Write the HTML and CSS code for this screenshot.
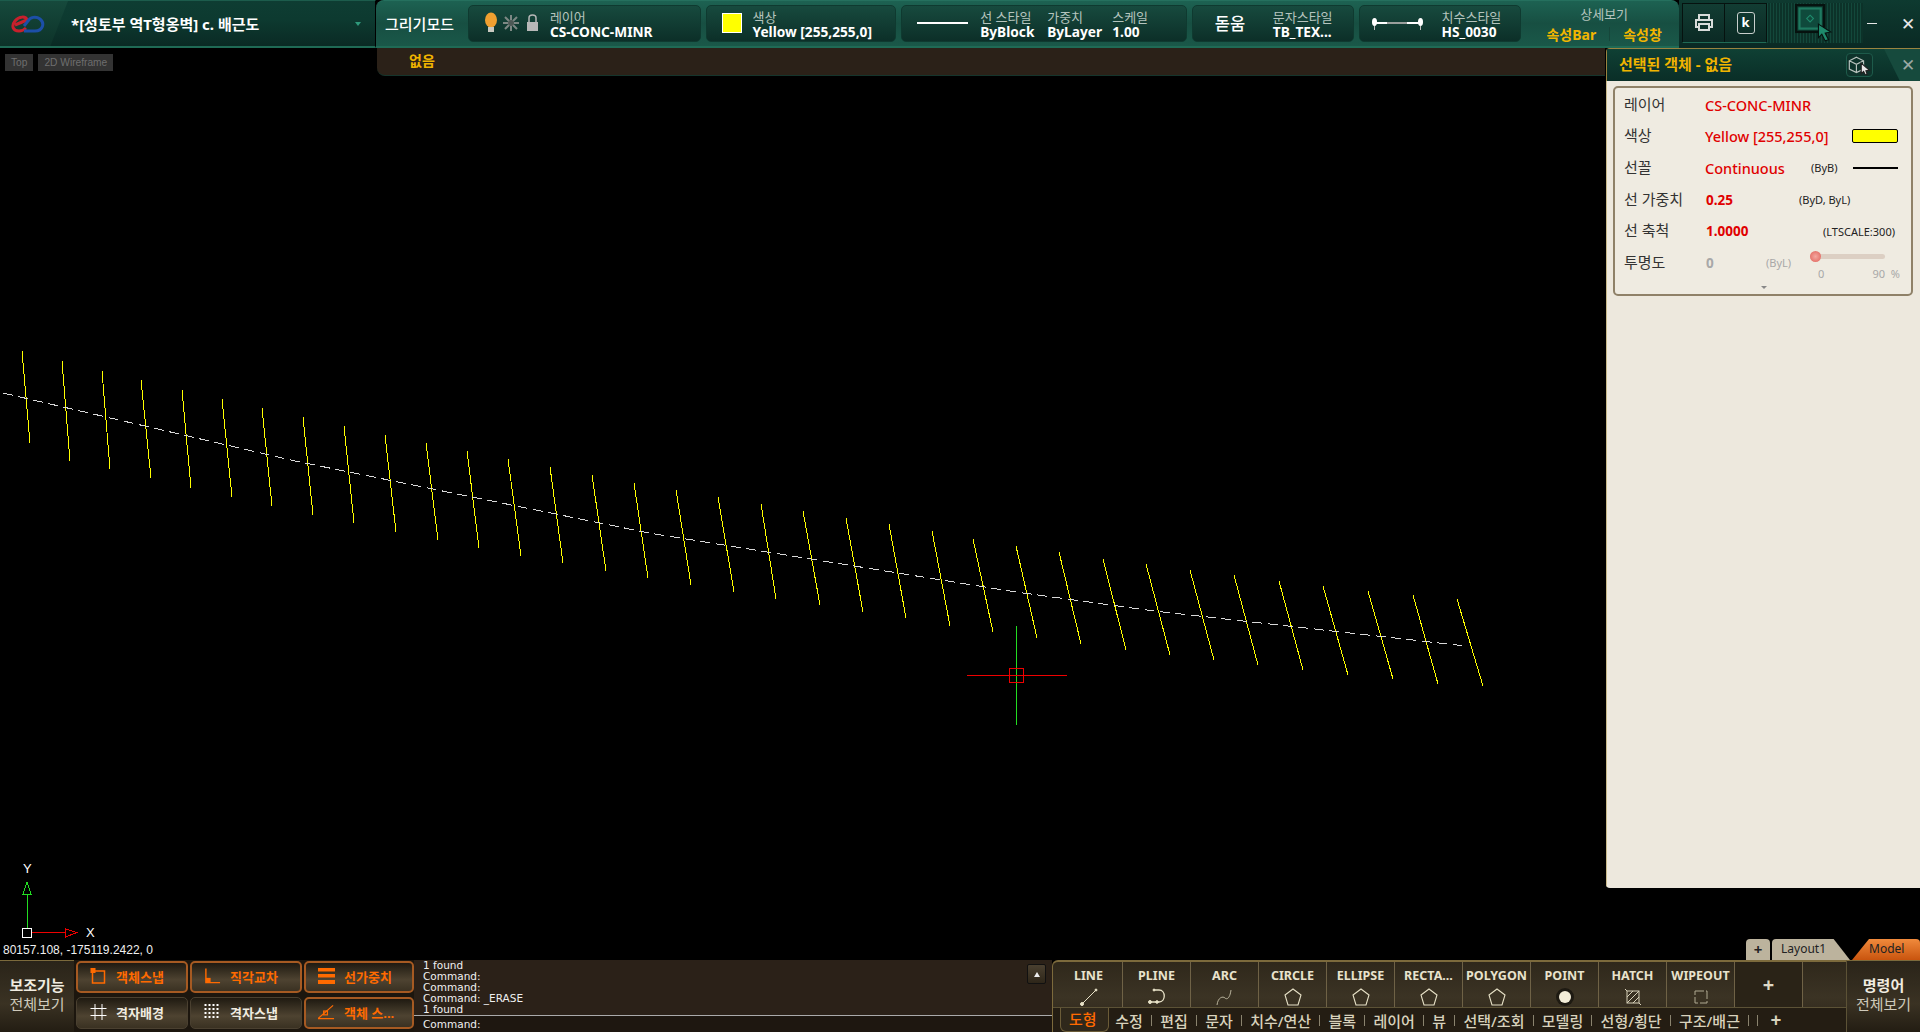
FILE: index.html
```html
<!DOCTYPE html>
<html lang="ko">
<head>
    <meta charset="UTF-8">
    <title>*[성토부 역T형옹벽] c. 배근도</title>
    <link rel="stylesheet" href="styles.css">
</head>
<body>
    <header class="topbar">
        <div class="title-panel">
            <div class="logo-zone">
                <svg width="34" height="18" viewBox="0 0 34 18" fill="none" stroke-width="3">
                    <path d="M4 10 L16 5 C15 1 8 1 4 6 C0 11 2 16 8 16 C11 16 13 15 15 13" stroke="#c8202c"/>
                    <path d="M13 16 L24 16 C32 16 34 8 29 4 C25 1 19 2 17 6 L13 11" stroke="#1c4fa8"/>
                </svg>
            </div>
            <span class="doc-title">*[성토부 역T형옹벽] c. 배근도</span>
            <i class="tri-down"></i>
        </div>
        <div class="toolbar">
            <span class="mode-label">그리기모드</span>
            <div class="group group-layer">
                <svg class="layer-icons" width="62" height="24" viewBox="0 0 62 24">
                    <ellipse cx="7" cy="9" rx="6" ry="7.5" fill="#f0a030"/>
                    <rect x="4" y="16" width="6" height="5" fill="#c9c9c0"/>
                    <g stroke="#7d8884" stroke-width="2">
                        <path d="M27 4V20M19 12H35M21 6L33 18M33 6L21 18"/>
                    </g>
                    <circle cx="27" cy="12" r="3" fill="#4d5855"/>
                    <path d="M45 11V7C45 3 52 3 52 7V11" fill="none" stroke="#b8b8b8" stroke-width="1.5"/>
                    <rect x="43" y="11" width="11" height="9" fill="#b8b8b8"/>
                </svg>
                <div class="field"><small>레이어</small><b>CS-CONC-MINR</b></div>
            </div>
            <div class="group group-color">
                <i class="color-swatch"></i>
                <div class="field"><small>색상</small><b>Yellow [255,255,0]</b></div>
            </div>
            <div class="group group-line">
                <i class="line-sample"></i>
                <div class="field f-linetype"><small>선 스타일</small><b>ByBlock</b></div>
                <div class="field f-weight"><small>가중치</small><b>ByLayer</b></div>
                <div class="field"><small>스케일</small><b>1.00</b></div>
            </div>
            <div class="group group-text">
                <span class="font-name">돋움</span>
                <div class="field"><small>문자스타일</small><b>TB_TEX...</b></div>
            </div>
            <div class="group group-dim">
                <svg width="53" height="14" viewBox="0 0 53 14" class="dim-icon">
                    <path d="M4 7H16" stroke="#fff" stroke-width="2"/>
                    <path d="M16 7H36" stroke="#9a9f9c" stroke-width="2"/>
                    <path d="M36 7H49" stroke="#fff" stroke-width="2"/>
                    <ellipse cx="3.5" cy="6" rx="2.5" ry="4" fill="#fff"/>
                    <ellipse cx="49.5" cy="6" rx="2.5" ry="4" fill="#fff"/>
                    <path d="M3.5 10V14M49.5 10V14" stroke="#bbb"/>
                </svg>
                <div class="field"><small>치수스타일</small><b>HS_0030</b></div>
            </div>
            <div class="details">
                <small>상세보기</small>
                <div class="details-links"><b>속성Bar</b><i></i><b>속성창</b></div>
            </div>
        </div>
        <div class="win-controls">
            <div class="win-buttons">
                <button class="win-btn">
                    <svg width="22" height="22" viewBox="0 0 22 22" fill="none" stroke="#d8dcda" stroke-width="2">
                        <path d="M6 7V3H16V7M6 15H3V8H19V15H16"/>
                        <rect x="6" y="12" width="10" height="6"/>
                    </svg>
                </button>
                <button class="win-btn"><span class="k-key">k</span></button>
            </div>
            <div class="stripes">
                <svg width="38" height="38" viewBox="0 0 34 34" class="screen-icon">
                    <rect x="1" y="1" width="25" height="24" fill="#0d3a30" stroke="#06120f" stroke-width="2"/>
                    <rect x="4" y="4" width="19" height="18" fill="#0f4a3c" stroke="#1f7a60" stroke-width="2"/>
                    <path d="M13.5 10L16.5 13L13.5 16L10.5 13Z" fill="none" stroke="#1f8a6c"/>
                    <path d="M21 18L32 25L27 26L30 32L27 33L24 27L21 30Z" fill="#1f8a6c" stroke="#06120f"/>
                </svg>
            </div>
            <i class="win-min"></i>
            <span class="win-close">✕</span>
        </div>
    </header>

    <main class="workspace">
        <svg class="drawing" width="1920" height="912" viewBox="0 48 1920 912" shape-rendering="crispEdges" fill="none">
            <g stroke="#ffff00">
                <path d="M22 351L30 443M62 361L70 461M102 371L110 469M141 380L151 478M182 390L191 488M222 399L232 497M262 408L272 506"/>
                <path d="M303 417L313 515M344 426L354 523M385 435L396 532M426 443L438 540M467 451L479 548M508 459L521 556M550 467L563 563M592 475L606 571M634 483L648 578"/>
                <path d="M676 490L691 585M718 497L734 592M761 504L776 599M803 511L820 605M846 518L863 612M889 524L906 618M932 531L950 626M973 539L993 632"/>
                <path d="M1016 546L1037 638M1059 552L1081 644M1103 559L1126 650M1146 564L1170 655M1190 570L1214 660M1234 575L1258 665M1279 581L1303 670M1323 586L1348 675M1368 591L1393 679M1413 595L1438 684M1457 599L1483 686"/>
            </g>
            <polyline points="3,393 295,461 649,533 1016,592 1154,611 1466,646" stroke="#d8d8d8" stroke-dasharray="10 5.5"/>
            <path d="M1016.5 626V725" stroke="#22dd22"/>
            <path d="M967 675.5H1067" stroke="#ee0000"/>
            <rect x="1009.5" y="668.5" width="14" height="14" stroke="#ee0000" stroke-width="1.5"/>
            <path d="M27.5 928V894" stroke="#22dd22"/>
            <path d="M27 882L23 894H31Z" stroke="#22dd22"/>
            <path d="M32 932.5H65" stroke="#ee0000"/>
            <path d="M65.5 929V937L77 932.5Z" stroke="#ee0000"/>
            <rect x="22.5" y="928.5" width="9" height="9" stroke="#fff"/>
            <text x="23" y="873" class="axis">Y</text>
            <text x="86" y="937" class="axis">X</text>
        </svg>
        <div class="canvas-col">
            <div class="subbar"><span>없음</span></div>
            <div class="view-tags"><span>Top</span><span>2D Wireframe</span></div>
            <div class="coords">80157.108, -175119.2422, 0</div>
        </div>
        <aside class="side-col">
            <section class="props">
                <div class="props-head">
                    <h2>선택된 객체 - 없음</h2>
                    <button class="pick-btn">
                        <svg width="24" height="19" viewBox="0 0 20 16" fill="none" stroke="#b8c2bd">
                            <path d="M7 1L13 4V11L7 14L1 11V4ZM1 4L7 7L13 4M7 7V14"/>
                            <path d="M11 6L18 12L15 12.5L16 15.5L14.5 16L13 13L11 15Z" fill="#e8e8e8" stroke="#222"/>
                        </svg>
                    </button>
                    <div class="close-zone"><span>✕</span></div>
                </div>
                <div class="props-body">
                    <div class="props-box">
                        <div class="prow"><label>레이어</label><span class="pval">CS-CONC-MINR</span></div>
                        <div class="prow"><label>색상</label><span class="pval">Yellow [255,255,0]</span><i class="p-swatch"></i></div>
                        <div class="prow"><label>선꼴</label><span class="pval w106">Continuous</span><span class="pnote">(ByB)</span><i class="p-line"></i></div>
                        <div class="prow"><label>선 가중치</label><span class="pval bold w94">0.25</span><span class="pnote">(ByD, ByL)</span></div>
                        <div class="prow"><label>선 축척</label><span class="pval bold w118">1.0000</span><span class="pnote">(LTSCALE:300)</span></div>
                        <div class="prow"><label>투명도</label><span class="pval bold off w61">0</span><span class="pnote off">(ByL)</span>
                            <div class="slider">
                                <div class="track"><i class="thumb"></i></div>
                                <div class="slider-labels"><span>0</span><span>90&nbsp;&nbsp;%</span></div>
                            </div>
                        </div>
                        <i class="more-tri"></i>
                    </div>
                </div>
            </section>
            <nav class="layout-tabs">
                <span class="ltab plus">+</span>
                <span class="ltab layout">Layout1</span>
                <span class="ltab model">Model</span>
            </nav>
        </aside>
    </main>

    <footer class="bottombar">
        <div class="side-btn"><b>보조기능</b><span>전체보기</span></div>
        <div class="snap-grid">
            <button class="snap on">
                <svg height="16" viewBox="0 0 16 16" fill="none" stroke="#ff6a00" stroke-width="1.5"><rect x="2" y="3" width="12" height="12"/><rect x="0" y="0" width="5" height="5" fill="#ff6a00" stroke="none"/></svg>
                객체스냅</button>
            <button class="snap on">
                <svg height="16" viewBox="0 0 18 16" fill="none" stroke="#ff6a00" stroke-width="1.5"><path d="M2 0V15H17"/><rect x="2" y="10" width="5" height="5" fill="#ff6a00" stroke="none"/></svg>
                직각교차</button>
            <button class="snap on">
                <svg height="16" viewBox="0 0 17 16" fill="#ff6a00"><rect width="17" height="3.5"/><rect y="6" width="17" height="3.5"/><rect y="12" width="17" height="4"/></svg>
                선가중치</button>
            <button class="snap">
                <svg height="16" viewBox="0 0 16 16" fill="none" stroke="#fff"><path d="M4.5 0V16M11.5 0V16M0 4.5H16M0 11.5H16"/></svg>
                격자배경</button>
            <button class="snap">
                <svg height="16" viewBox="0 0 16 16" fill="#fff"><path d="M0 0h2v2H0zM4 0h2v2H4zM8 0h2v2H8zM12 0h2v2h-2zM0 4h2v2H0zM4 4h2v2H4zM8 4h2v2H8zM12 4h2v2h-2zM0 8h2v2H0zM4 8h2v2H4zM8 8h2v2H8zM12 8h2v2h-2zM0 12h2v2H0zM4 12h2v2H4zM8 12h2v2H8zM12 12h2v2h-2z"/></svg>
                격자스냅</button>
            <button class="snap on">
                <svg height="16" viewBox="0 0 18 16" fill="none" stroke="#ff6a00" stroke-width="1.3"><path d="M0 15L16 1M0 15H17"/><rect x="6" y="7" width="4" height="4"/></svg>
                객체 스...</button>
        </div>
        <div class="cmd">
            <div class="cmd-log">
                <div>1 found</div>
                <div>Command:</div>
                <div>Command:</div>
                <div>Command: _ERASE</div>
                <div>1 found</div>
                <button class="cmd-up"><i></i></button>
            </div>
            <div class="cmd-input">Command:</div>
        </div>
        <div class="tools">
            <div class="tool-row">
                <div class="tool"><b>LINE</b>
                    <svg width="20" height="20" viewBox="0 0 20 20" fill="#e8e2c8" stroke="#e8e2c8"><path d="M3 17L17 3"/><circle cx="3" cy="17" r="1.5"/><circle cx="17" cy="3" r="1"/></svg></div>
                <div class="tool"><b>PLINE</b>
                    <svg width="20" height="20" viewBox="0 0 20 20" fill="none" stroke="#e8e2c8"><path d="M7 3H12C19 3 19 15 12 15H3" stroke-width="1.3"/><circle cx="3" cy="15" r="1.5" fill="#e8e2c8"/><circle cx="10" cy="15" r="1.3" fill="#e8e2c8"/><circle cx="7" cy="3" r="1" fill="#e8e2c8"/></svg></div>
                <div class="tool"><b>ARC</b>
                    <svg width="20" height="20" viewBox="0 0 20 20" fill="none" stroke="#b9b39c"><path d="M2 18C3 10 8 9 10 11C12 13 15 11 16 3"/></svg></div>
                <div class="tool"><b>CIRCLE</b><svg class="penta" viewBox="0 0 20 20"><path d="M10 2L18 8L15 18H5L2 8Z"/></svg></div>
                <div class="tool"><b>ELLIPSE</b><svg class="penta" viewBox="0 0 20 20"><path d="M10 2L18 8L15 18H5L2 8Z"/></svg></div>
                <div class="tool"><b>RECTA...</b><svg class="penta" viewBox="0 0 20 20"><path d="M10 2L18 8L15 18H5L2 8Z"/></svg></div>
                <div class="tool"><b>POLYGON</b><svg class="penta" viewBox="0 0 20 20"><path d="M10 2L18 8L15 18H5L2 8Z"/></svg></div>
                <div class="tool"><b>POINT</b>
                    <svg width="20" height="20" viewBox="0 0 20 20"><circle cx="10" cy="10" r="9" fill="#1e1a12"/><circle cx="10" cy="10" r="6" fill="#f4eed8"/></svg></div>
                <div class="tool"><b>HATCH</b>
                    <svg width="20" height="20" viewBox="0 0 20 20" fill="none" stroke="#d8d2ba"><rect x="4" y="4" width="12" height="12"/><path d="M4 10L10 4M4 16L16 4M10 16L16 10M2 2L4 4M16 16L18 18"/></svg></div>
                <div class="tool"><b>WIPEOUT</b>
                    <svg width="20" height="20" viewBox="0 0 20 20" fill="none" stroke="#b0aa92"><rect x="4" y="4" width="12" height="12" stroke-dasharray="9 2"/></svg></div>
                <div class="tool tool-add"><span>+</span></div>
                <div class="tool tool-last"></div>
            </div>
            <div class="tool-tabs">
                <span class="ttab active">도형</span>
                <span class="ttab">수정</span><i class="sep"></i>
                <span class="ttab">편집</span><i class="sep"></i>
                <span class="ttab">문자</span><i class="sep"></i>
                <span class="ttab">치수/연산</span><i class="sep"></i>
                <span class="ttab">블록</span><i class="sep"></i>
                <span class="ttab">레이어</span><i class="sep"></i>
                <span class="ttab">뷰</span><i class="sep"></i>
                <span class="ttab">선택/조회</span><i class="sep"></i>
                <span class="ttab">모델링</span><i class="sep"></i>
                <span class="ttab">선형/횡단</span><i class="sep"></i>
                <span class="ttab">구조/배근</span><i class="sep"></i><i class="sep"></i>
                <span class="ttab add">+</span>
            </div>
        </div>
        <div class="side-btn cmd-all"><b>명령어</b><span>전체보기</span></div>
    </footer>
</body>
</html>
```

FILE: styles.css
```css
* {
    box-sizing: border-box;
}
body {
    margin: 0;
    width: 1920px;
    height: 1032px;
    overflow: hidden;
    background-color: #000;
    color: #fff;
    font-family: "Noto Sans", "Noto Sans CJK KR", sans-serif;
    display: flex;
    flex-direction: column;
}
button {
    font-family: inherit;
    padding: 0;
    border: none;
    background: none;
    color: inherit;
}

/* top bar */
.topbar {
    display: flex;
    height: 48px;
    flex: none;
}
.title-panel {
    width: 376px;
    display: flex;
    align-items: center;
    background: linear-gradient(#0e3d33, #0d3a30 40%, #0a2a24);
    border-top: 1px solid #1c5c4c;
    border-bottom: 2px solid #1f6a55;
    border-right: 1px solid #000;
}
.logo-zone {
    width: 68px;
    height: 45px;
    background: linear-gradient(#16493c, #0d3329);
    clip-path: polygon(0 0, 100% 0, 74% 100%, 0 100%);
    display: flex;
    align-items: center;
    padding-left: 11px;
}
.doc-title {
    margin-left: 3px;
    font-size: 15px;
    font-weight: 700;
    white-space: pre;
    flex: 1;
}
.tri-down {
    margin-right: 14px;
    border: 3px solid transparent;
    border-top: 4px solid #2f9a7c;
    border-bottom: 0;
}
.toolbar {
    width: 1303px;
    display: flex;
    align-items: center;
    gap: 5px;
    background: linear-gradient(#1d6252, #174f42 50%, #1a5849);
    border-top: 1px solid #25705e;
    border-bottom: 2px solid #1f6a55;
    border-radius: 8px 8px 0 0;
    position: relative;
    padding-bottom: 1px;
}
.mode-label {
    width: 87px;
    padding-left: 9px;
    font-size: 15px;
    font-weight: 500;
    padding-top: 1px;
}
.group {
    height: 37px;
    display: flex;
    align-items: center;
    border: 1px solid #0f3a30;
    border-radius: 5px;
    background: linear-gradient(#174a3e, #0c2f28);
}
.field {
    display: flex;
    flex-direction: column;
    line-height: 15px;
    padding-top: 3px;
}
.field small {
    font-size: 13px;
    color: #b5c4be;
    line-height: 13px;
}
.field b {
    font-size: 13.7px;
    font-weight: 700;
    line-height: 15px;
    white-space: nowrap;
}
.group-layer {
    width: 233px;
    padding-left: 15px;
}
.layer-icons {
    margin-right: 4px;
}
.group-color {
    width: 191px;
    padding-left: 15px;
}
.color-swatch {
    width: 20px;
    height: 20px;
    background-color: #ffff00;
    border: 1px solid #fff;
    margin-right: 11px;
}
.group-line {
    width: 286px;
    padding-left: 15px;
}
.line-sample {
    width: 51px;
    height: 2px;
    background-color: #fff;
    margin-right: 12px;
}
.f-linetype {
    width: 67px;
}
.f-weight {
    width: 65px;
}
.group-text {
    width: 162px;
    padding-left: 22px;
}
.font-name {
    width: 58px;
    font-size: 16.5px;
    font-weight: 500;
}
.group-dim {
    width: 163px;
    padding-left: 11px;
}
.dim-icon {
    margin-right: 18px;
}
.details {
    width: 150px;
    display: flex;
    flex-direction: column;
    align-items: center;
    gap: 4px;
    margin-left: 3px;
    padding-top: 3px;
}
.details small {
    font-size: 13px;
    color: #b5c4be;
    line-height: 15px;
}
.details-links {
    display: flex;
    align-items: center;
    gap: 13px;
    font-size: 14px;
    color: #f2b600;
    line-height: 17px;
}
.details-links i {
    width: 1px;
    height: 14px;
    background-color: #16463a;
}
.win-controls {
    flex: 1;
    display: flex;
    align-items: center;
    background: linear-gradient(#0e3a30, #0a2a24);
    border-bottom: 2px solid #0a2a24;
    padding-left: 3px;
}
.win-buttons {
    display: flex;
    height: 40px;
    border: 1px solid #06120f;
    border-bottom-color: #1f6a55;
    background-color: #06120f;
    gap: 1px;
}
.win-btn {
    width: 41px;
    background: linear-gradient(#123d33, #0b2a24);
    display: flex;
    align-items: center;
    justify-content: center;
}
.k-key {
    width: 18px;
    height: 22px;
    border: 1px solid #c8cfcc;
    border-radius: 3px;
    font-size: 13px;
    font-weight: 700;
    line-height: 19px;
    text-align: center;
}
.stripes {
    width: 96px;
    height: 40px;
    background: repeating-linear-gradient(90deg, #13483b 0 1px, #0c3229 1px 3px);
    display: flex;
    align-items: center;
    padding-left: 28px;
}
.win-min {
    width: 10px;
    height: 1px;
    background-color: #e8e8e8;
    margin-left: 4px;
}
.win-close {
    margin-left: 24px;
    font-size: 17px;
    line-height: 17px;
    color: #e8e8e8;
}

/* drawing area */
.workspace {
    height: 912px;
    flex: none;
    display: flex;
    position: relative;
}
.drawing {
    position: absolute;
    left: 0;
    top: 0;
}
.axis {
    font-family: "Liberation Sans", sans-serif;
    font-size: 13px;
    fill: #fff;
    stroke: none;
}
.canvas-col {
    position: relative;
    width: 1606px;
    display: flex;
    flex-direction: column;
}
.subbar {
    margin-left: 377px;
    margin-right: 1px;
    height: 28px;
    background-color: #2b2118;
    border-bottom: 1px solid #15352c;
    border-radius: 0 0 0 8px;
    padding-left: 32px;
    font-size: 14px;
    font-weight: 700;
    line-height: 26px;
    color: #f0b400;
}
.view-tags {
    display: flex;
    gap: 5px;
    margin: -22px 0 0 5px;
    font-family: "Liberation Sans", sans-serif;
    font-size: 10.2px;
    width: 200px;
}
.view-tags span {
    height: 17px;
    line-height: 17px;
    padding: 0 6px;
    background-color: #333;
    color: #6e6e6e;
}
.coords {
    margin-top: auto;
    padding: 0 0 2px 3px;
    font-family: "Liberation Sans", sans-serif;
    font-size: 12px;
    line-height: 15px;
    color: #f0f0f0;
}
.side-col {
    position: relative;
    width: 314px;
    display: flex;
    flex-direction: column;
}
.props {
    height: 840px;
    display: flex;
    flex-direction: column;
    border-radius: 4px 0 0 4px;
    overflow: hidden;
}
.props-head {
    height: 33px;
    flex: none;
    display: flex;
    align-items: center;
    background: linear-gradient(#0f4034, #0a2e27);
    border-top: 1px solid #9a8440;
    border-left: 1px solid #9a8440;
    padding: 0 0 3px 12px;
    position: relative;
}
.props-head h2 {
    margin: 0;
    font-size: 15px;
    font-weight: 700;
    color: #f0b400;
    width: 227px;
}
.pick-btn {
    width: 27px;
    height: 24px;
    margin-top: 3px;
    border: 1px solid #1d5a4a;
    border-radius: 4px;
    background-color: #0e332b;
    display: flex;
    align-items: center;
    justify-content: center;
}
.close-zone {
    position: absolute;
    right: 0;
    top: 0;
    width: 36px;
    height: 32px;
    background-color: #164a3d;
    clip-path: polygon(0 0, 100% 0, 100% 100%, 44% 100%);
    text-align: right;
    padding: 7px 5px 0 0;
    font-size: 17px;
    line-height: 18px;
    color: #9aa8a3;
}
.props-body {
    flex: 1;
    background-color: #ede8dd;
    border-left: 1px solid #c9b98a;
    padding: 5px 7px 0 6px;
}
.props-box {
    position: relative;
    height: 210px;
    padding: 1px 13px 0 9px;
    background-color: #efebe1;
    border: 2px solid #8f8168;
    border-radius: 5px;
    color: #333;
}
.prow {
    height: 31.6px;
    display: flex;
    align-items: center;
}
.prow label {
    width: 81px;
    flex: none;
    margin-top: -3px;
    font-size: 15px;
    color: #333;
}
.pval {
    font-size: 14.5px;
    font-weight: 500;
    color: #e00000;
    white-space: nowrap;
}
.pval.bold {
    font-weight: 700;
    font-size: 13.5px;
    padding-left: 1px;
}
.w61 {
    width: 61px;
}
.w94 {
    width: 94px;
}
.w106 {
    width: 106px;
}
.w118 {
    width: 118px;
}
.pval.off {
    color: #a8a8a8;
}
.pnote {
    font-size: 11px;
    color: #222;
    white-space: nowrap;
}
.pnote.off {
    color: #a8a8a8;
}
.p-swatch {
    width: 46px;
    height: 14px;
    margin-left: auto;
    background-color: #ffff00;
    border: 1px solid #000;
    border-radius: 2px;
}
.p-line {
    width: 45px;
    height: 2px;
    margin-left: auto;
    background-color: #000;
}
.slider {
    width: 90px;
    margin: 0 -2px 0 auto;
    padding-top: 5px;
    height: 27px;
}
.track {
    position: relative;
    width: 75px;
    height: 5px;
    border-radius: 3px;
    background-color: #dccfc3;
}
.thumb {
    position: absolute;
    left: 0;
    top: -3px;
    width: 11px;
    height: 11px;
    border-radius: 50%;
    background: radial-gradient(#f4a8a0, #e06058);
}
.slider-labels {
    display: flex;
    justify-content: space-between;
    margin-top: 8px;
    padding: 0 0 0 8px;
    font-size: 11px;
    line-height: 13px;
    color: #a8a8a8;
}
.more-tri {
    position: absolute;
    left: 146px;
    bottom: 5px;
    border: 3px solid transparent;
    border-top: 3px solid #888;
    border-bottom: 0;
}
.layout-tabs {
    margin-top: auto;
    display: flex;
    justify-content: flex-end;
    height: 21px;
    font-size: 12px;
    color: #222;
}
.ltab {
    display: block;
    line-height: 20px;
    background-color: #bcb39d;
    border-radius: 4px 4px 0 0;
}
.plus {
    width: 24px;
    text-align: center;
    font-weight: 700;
    font-size: 15px;
    margin-right: 2px;
}
.layout {
    width: 78px;
    padding-left: 9px;
    clip-path: polygon(0 0, 79% 0, 100% 100%, 0 100%);
    margin-right: 2px;
}
.model {
    width: 68px;
    padding-left: 17px;
    background: linear-gradient(#f08a3c, #c9540e);
    clip-path: polygon(25% 0, 100% 0, 100% 100%, 0 100%);
}

/* bottom */
.bottombar {
    height: 72px;
    flex: none;
    display: flex;
}
.side-btn {
    width: 74px;
    display: flex;
    flex-direction: column;
    align-items: center;
    padding-top: 15px;
    background: linear-gradient(#2a2419, #3a3223 60%, #231d13);
    border-top: 1px solid #7c6a3c;
    font-size: 15px;
    line-height: 19px;
    color: #cfcabb;
}
.side-btn b {
    color: #f0ece0;
    font-weight: 700;
}
.snap-grid {
    width: 340px;
    display: grid;
    grid-template-columns: 112px 112px 110px;
    grid-template-rows: 32px 32px;
    gap: 4px 2px;
    padding: 1px 0 0 2px;
    background-color: #1c160e;
}
.snap {
    display: flex;
    align-items: center;
    padding: 0 0 2px 13px;
    gap: 9px;
    border: 1px solid #4a4030;
    border-radius: 5px;
    background: linear-gradient(#1f1a11, #4e4331 60%, #3a3122);
    font-size: 13px;
    font-weight: 700;
    color: #f0ece0;
    white-space: nowrap;
}
.snap svg {
    width: 17px;
    flex: none;
}
.snap.on {
    border: 2px solid #a65a22;
    padding-left: 12px;
    color: #ff6a00;
}
.cmd {
    width: 638px;
    display: flex;
    flex-direction: column;
    font-family: "DejaVu Sans", sans-serif;
    font-size: 10.5px;
    line-height: 11px;
    color: #f0f0f0;
    background-color: #2b2118;
}
.cmd-log {
    position: relative;
    height: 56px;
    padding: 0 0 0 9px;
    border-bottom: 1px solid #aaa;
}
.cmd-input {
    flex: 1;
    padding: 3px 0 0 9px;
    background-color: #1e1710;
}
.cmd-up {
    position: absolute;
    right: 6px;
    top: 4px;
    width: 19px;
    height: 20px;
    border: 1px solid #111;
    border-radius: 2px;
    background: linear-gradient(#4a4030, #2e2619);
    display: flex;
    align-items: center;
    justify-content: center;
}
.cmd-up i {
    border: 3px solid transparent;
    border-bottom: 5px solid #eee;
    border-top: 0;
}
.tools {
    width: 794px;
    display: flex;
    flex-direction: column;
    background: linear-gradient(#2f281b, #3b3324 50%, #2a2317);
    border-top: 2px solid #7c6a3c;
    border-left: 1px solid #7c6a3c;
    border-radius: 6px 0 0 0;
}
.tool-row {
    height: 46px;
    display: flex;
    padding-left: 2px;
    border-bottom: 1px solid #5c5236;
}
.tool {
    width: 68px;
    display: flex;
    flex-direction: column;
    align-items: center;
    padding-top: 6px;
    border-right: 1px solid #6f6246;
    flex: none;
}
.tool b {
    font-size: 12.5px;
    line-height: 16px;
    color: #e8e2cc;
    white-space: nowrap;
}
.tool svg {
    margin-top: 3px;
}
.penta {
    width: 20px;
    height: 20px;
    fill: none;
    stroke: #e8e2c8;
    stroke-width: 1.1;
}
.tool-add {
    background-color: #2a2317;
    justify-content: center;
    padding-top: 0;
    font-size: 20px;
    font-weight: 700;
    color: #ddd8c6;
}
.tool-last {
    border-right: 0;
    width: 43px;
}
.tool-tabs {
    flex: 1;
    display: flex;
    align-items: center;
    gap: 8.2px;
    padding-left: 7px;
    font-size: 15px;
    font-weight: 500;
    color: #d8d2bc;
    background-color: #241d13;
}
.ttab {
    white-space: nowrap;
}
.ttab.active {
    align-self: stretch;
    width: 49px;
    margin-right: -2px;
    padding-left: 8px;
    line-height: 22px;
    color: #ff6a00;
    background-color: #2f281b;
    border: 1px solid #6b5c38;
    border-top: 0;
    border-radius: 0 0 6px 6px;
}
.ttab.add {
    margin-left: 4px;
    font-size: 19px;
    font-weight: 700;
    line-height: 20px;
}
.sep {
    width: 1px;
    height: 11px;
    background-color: #8a836e;
}
.cmd-all {
    width: 74px;
    border-left: 1px solid #5c5236;
}
```
